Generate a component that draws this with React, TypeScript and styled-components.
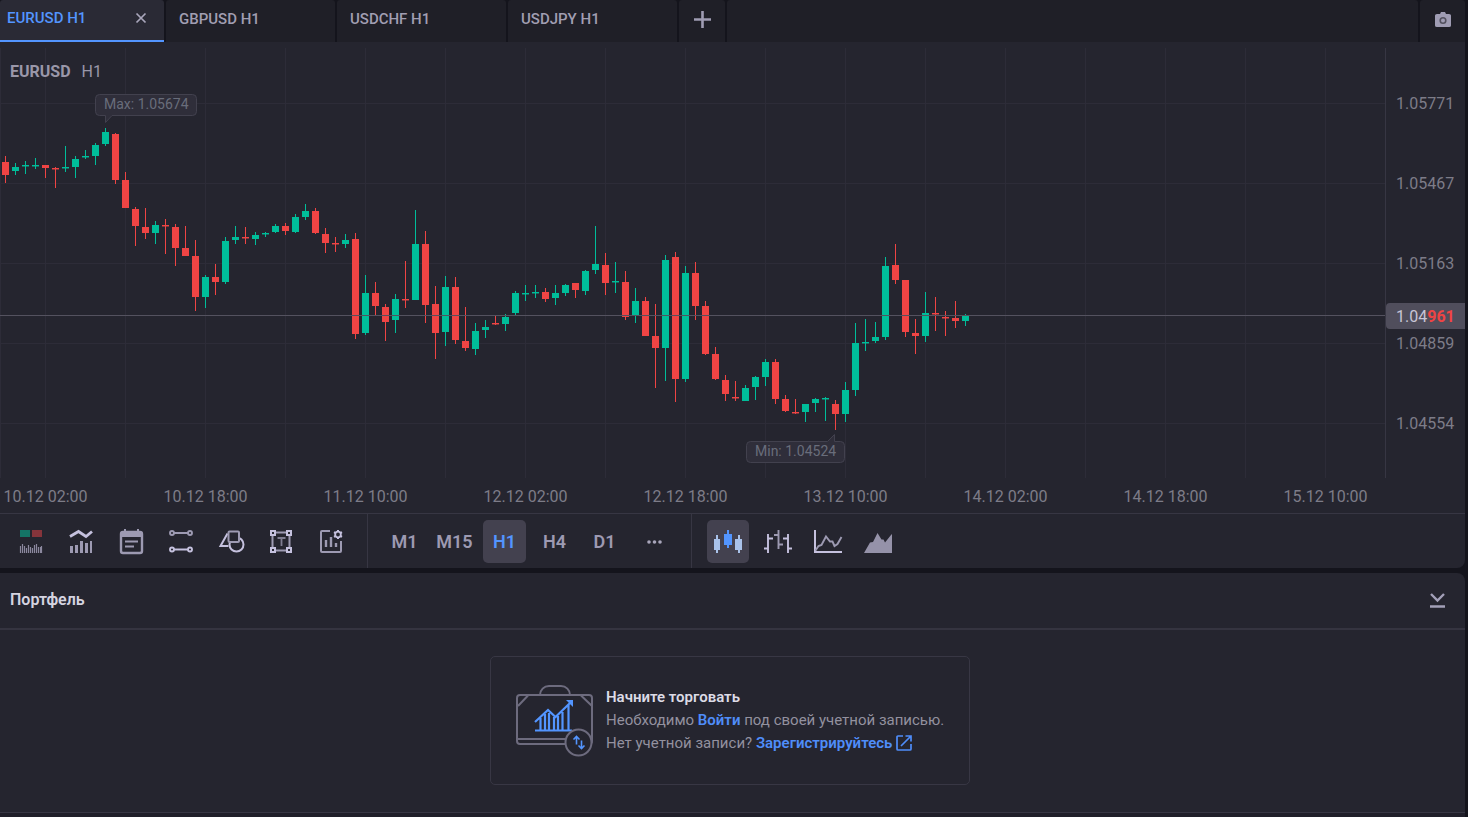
import React from 'react';
import styled, { createGlobalStyle } from 'styled-components';

const c = {
  page: '#14141c',
  panel: '#25252f',
  tab: '#1f1f27',
  line: '#373643',
  grid: '#2d2c38',
  icon: '#9d9ab2',
  bright: '#c5c1de',
  blue: '#5395ff',
  up: '#00bd9a',
  down: '#ef4444',
};

const GlobalStyle = createGlobalStyle`
  * { box-sizing: border-box; }
  body {
    margin: 0;
    background: ${c.page};
    font-family: Roboto, "Liberation Sans", sans-serif;
  }
  button { font: inherit; color: inherit; background: none; border: 0; padding: 0; cursor: pointer; }
  svg { display: block; }
`;

const Page = styled.div`
  display: flex;
  flex-direction: column;
  min-height: 100vh;
  padding-right: 3px;
`;

const TabBar = styled.div`
  display: flex;
  gap: 2px;
  height: 42px;
`;

const Tab = styled.div<{ $active?: boolean }>`
  display: flex;
  align-items: center;
  justify-content: space-between;
  width: ${p => (p.$active ? 164 : 169)}px;
  padding: 0 16px 4px ${p => (p.$active ? 7 : 13)}px;
  border-bottom: ${p => (p.$active ? `2px solid ${c.blue}` : '0')};
  border-radius: 3px 3px 0 0;
  background: ${p => (p.$active ? '#2a2a35' : c.tab)};
  color: ${p => (p.$active ? c.blue : '#a19eb2')};
  font-size: 15px;
  font-weight: 500;
  line-height: 20px;
`;

const TabTool = styled.button<{ $width: number }>`
  display: flex;
  align-items: center;
  justify-content: center;
  width: ${p => p.$width}px;
  padding-bottom: 3px;
  border-radius: 3px 3px 0 0;
  background: ${c.tab};
`;

const TabFill = styled.div`
  flex: 1;
  border-radius: 3px 3px 0 0;
  background: ${c.tab};
`;

const ChartPanel = styled.section`
  border-radius: 0 0 8px 0;
  background: ${c.panel};
`;

const ChartRow = styled.div`
  position: relative;
  display: flex;
  height: 436px;
  padding-top: 6px;
`;

const Plot = styled.svg`
  flex: 1;
  min-width: 0;
  height: 430px;
`;

const Legend = styled.div`
  position: absolute;
  left: 10px;
  top: 20px;
  display: flex;
  gap: 11px;
  color: #9a97a9;
  font-size: 16px;
  line-height: 20px;
`;

const PriceAxis = styled.div`
  position: relative;
  width: 80px;
  padding-top: 16px;
  border-left: 1px solid ${c.line};
`;

const Price = styled.div`
  height: 80px;
  padding-left: 10px;
  color: #7d7c88;
  font-size: 16px;
  line-height: 80px;
`;

const CurrentPrice = styled.div`
  position: absolute;
  top: 255px;
  left: 0;
  right: 0;
  height: 26px;
  padding-left: 10px;
  border-radius: 4px 0 0 4px;
  background: #504e5c;
  color: #c8c5d6;
  font-size: 16px;
  line-height: 28px;

  b { color: ${c.down}; font-weight: 700; }
`;

const TimeAxis = styled.div`
  display: flex;
  gap: 70px;
  height: 35px;
  overflow: hidden;
  color: #7d7c88;
  font-size: 16px;
  line-height: 38px;
`;

const Time = styled.span`
  flex: none;
  width: 91px;
  margin-right: -1px;
  text-align: center;
  white-space: nowrap;
`;

const Toolbar = styled.div`
  display: flex;
  height: 55px;
  border-top: 1px solid ${c.line};
`;

const ToolGroup = styled.div<{ $start: number; $gap: number; $last?: boolean }>`
  display: flex;
  align-items: flex-start;
  gap: ${p => p.$gap}px;
  padding: 6px 15px 0 ${p => p.$start}px;
  border-right: ${p => (p.$last ? '0' : `1px solid ${c.line}`)};
`;

const ToolButton = styled.button<{ $active?: boolean; $wide?: boolean }>`
  display: flex;
  align-items: center;
  justify-content: center;
  width: ${p => (p.$wide ? 43 : 42)}px;
  height: 43px;
  border-radius: 5px;
  background: ${p => (p.$active ? '#43414f' : 'transparent')};
  color: ${p => (p.$active ? c.blue : c.icon)};
  font-size: 18px;
  font-weight: 600;
`;

const Portfolio = styled.section`
  margin-top: 5px;
  border-radius: 0 8px 0 0;
  border-bottom: 1px solid ${c.line};
  background: ${c.panel};
`;

const PortfolioHead = styled.header`
  display: flex;
  align-items: center;
  justify-content: space-between;
  height: 57px;
  padding: 0 20px 2px 10px;
  border-bottom: 2px solid #353440;
`;

const Heading = styled.h2`
  margin: 0;
  color: #d5d4e0;
  font-size: 16px;
  font-weight: 600;
  line-height: 20px;
`;

const PortfolioBody = styled.div`
  display: flex;
  justify-content: center;
  padding: 26px 0 27px;
`;

const Card = styled.div`
  display: flex;
  align-items: center;
  gap: 12px;
  width: 480px;
  height: 129px;
  margin-right: 5px;
  padding-left: 25px;
  border: 1px solid #383744;
  border-radius: 5px;
`;

const CardText = styled.div`
  color: #93919f;
  font-size: 15px;
  line-height: 23px;
  white-space: nowrap;

  strong { color: #dcdbe6; font-weight: 600; }
  p { margin: 0; }
`;

const Link = styled.a`
  color: #4f8dfa;
  font-weight: 600;
  text-decoration: none;

  svg { display: inline-block; margin-left: 4px; vertical-align: -3px; }
`;

const Footer = styled.div`
  flex: 1;
  background: #201f29;
`;

/* Each candle: wick top, body top, body bottom, wick bottom, rising (1) or falling (0). */
const candles: number[][] = [
  [156,162,175,183,0],[163,167,171,175,1],[161,165,167,174,1],[158,165,167,169,1],[165,165,168,178,0],
  [167,168,170,188,0],[146,167,169,172,1],[156,159,167,178,1],[150,156,158,159,1],[143,145,156,165,1],
  [128,132,144,146,1],[133,134,180,184,0],[172,180,208,208,0],[207,209,226,246,0],[208,227,233,239,0],
  [221,225,233,244,1],[219,225,227,254,0],[224,227,248,266,0],[226,248,256,256,0],[240,256,297,311,0],
  [275,277,297,308,1],[264,277,282,295,0],[237,241,282,284,1],[226,237,240,244,1],[227,237,239,244,0],
  [232,235,239,245,1],[232,233,235,237,1],[224,226,232,233,1],[223,226,231,235,0],[214,217,232,233,1],
  [204,211,217,220,1],[208,211,233,234,0],[228,234,243,253,0],[237,243,245,252,0],[234,240,244,248,1],
  [233,239,334,339,0],[275,293,333,335,1],[282,293,306,315,0],[304,307,322,341,0],[294,299,320,333,1],
  [261,299,301,308,0],[210,244,300,300,1],[231,244,305,323,0],[286,304,333,359,0],[276,287,332,346,1],
  [277,287,340,344,0],[307,341,348,351,0],[323,331,349,355,1],[320,327,330,338,1],[315,323,325,325,0],
  [314,317,324,331,1],[291,293,313,315,1],[285,293,295,301,1],[285,292,294,298,1],[288,292,299,302,0],
  [285,293,298,305,1],[284,285,293,296,1],[283,283,290,298,0],[270,271,291,295,1],[226,264,270,274,1],
  [253,265,283,295,0],[262,281,283,293,1],[271,282,317,320,0],[288,301,316,323,1],[297,301,336,336,0],
  [304,336,348,388,0],[255,260,348,381,1],[252,257,379,402,0],[266,273,379,382,1],[262,273,306,320,0],
  [301,306,354,355,0],[347,354,379,380,0],[375,380,394,401,0],[381,397,399,401,0],[385,388,401,401,1],
  [376,377,387,400,1],[359,362,377,386,1],[359,362,399,404,0],[395,399,411,412,0],[399,412,414,414,0],
  [404,404,412,422,1],[398,399,403,412,1],[397,398,400,421,1],[400,404,414,430,0],[382,390,414,422,1],
  [323,343,390,396,1],[319,342,344,351,1],[322,337,341,343,1],[257,266,337,340,1],[244,265,280,284,0],
  [280,280,332,337,0],[319,333,336,354,0],[292,313,336,342,1],[297,313,315,331,0],[311,317,319,336,0],
  [301,318,321,328,0],[314,316,321,326,1],
];

const PLOT_TOP = 48;
const prices = ['1.05771', '1.05467', '1.05163', '1.04859', '1.04554'];
const times = [
  '10.12 02:00', '10.12 18:00', '11.12 10:00', '12.12 02:00', '12.12 18:00',
  '13.12 10:00', '14.12 02:00', '14.12 18:00', '15.12 10:00',
];
const gridX = [0, ...Array.from({ length: 17 }, (_, i) => 45 + i * 80)];

const Chart = () => (
  <Plot role="img" aria-label="EURUSD H1" shapeRendering="crispEdges">
    {gridX.map(x => <rect key={x} x={x} y="0" width="1" height="100%" fill={c.grid} />)}
    {prices.map((p, i) => <rect key={p} x="0" y={55 + i * 80} width="100%" height="1" fill={c.grid} />)}
    {candles.map(([wt, bt, bb, wb, rising], i) => {
      const thin = bb - bt === 2;
      return (
        <g key={i} fill={rising ? c.up : c.down}>
          <rect x={5 + i * 10} y={wt - PLOT_TOP} width="1" height={wb - wt} />
          <rect x={2 + i * 10} y={bt - PLOT_TOP} width="7" height={thin ? 1 : bb - bt} />
          {thin && <rect x={2 + i * 10} y={bt - PLOT_TOP + 1} width="7" height="1" opacity="0.45" />}
        </g>
      );
    })}
    <rect x="0" y="267" width="100%" height="1" fill="#54525f" />
    <g shapeRendering="auto" fill="#2f2e3a" stroke="#42414e">
      <path d="M99.500 46.500h93a4 4 0 0 1 4 4v13a4 4 0 0 1-4 4h-80.500l-6.500 7v-7h-6a4 4 0 0 1-4-4v-13a4 4 0 0 1 4-4z" />
      <path d="M750.500 393.500h77l7-7v7h6a4 4 0 0 1 4 4v13a4 4 0 0 1-4 4h-90a4 4 0 0 1-4-4v-13a4 4 0 0 1 4-4z" />
    </g>
    <g fill="#696d7b" fontSize="14">
      <text x="104" y="61">Max: 1.05674</text>
      <text x="755" y="408">Min: 1.04524</text>
    </g>
  </Plot>
);

const ToolIcon = ({ children }: { children: React.ReactNode }) => (
  <svg width="42" height="43" viewBox="0 0 42 43" fill="none" aria-hidden="true">{children}</svg>
);

const indicators: [string, React.ReactNode][] = [
  ['Trade levels', <>
    <path d="M10 10h10v7H10z" fill="#147466" /><path d="M22 10h10v7H22z" fill="#86343b" />
    <path d="M10.500 26v7M12.500 24v9M14.500 26v7M16.500 28v5M18.500 25v8M20.500 27v6M22.500 28v5M24.500 25v8M26.500 24v9M28.500 27v6M30.500 27v6M31.500 26v7" stroke={c.icon} strokeWidth="1.200" strokeOpacity=".85" />
  </>],
  ['Indicators', <>
    <path d="M10 16.500l8.500-5 7.500 5 6-5" stroke={c.bright} strokeWidth="2.800" />
    <path d="M10 26h3v7h-3zM15 25h3v8h-3zM20 21h3v12h-3zM25 23h3v10h-3zM30 21h2v12h-2z" fill={c.icon} />
  </>],
  ['Calendar', <>
    <rect x="11" y="12" width="21" height="21" rx="2" stroke={c.icon} strokeWidth="2.400" />
    <path d="M11 12h21v5H11zM14 9h2v4h-2zM27 9h2v4h-2z" fill={c.icon} />
    <path d="M15 21.500h13M15 26.500h9" stroke={c.icon} strokeWidth="2.200" />
  </>],
  ['Lines', <>
    <g stroke={c.icon} strokeWidth="1.900"><circle cx="12" cy="13" r="2" /><circle cx="30" cy="13" r="2" /><path d="M14 13h14" strokeWidth="2" /></g>
    <g stroke={c.bright} strokeWidth="1.900"><circle cx="12" cy="29.500" r="2" /><circle cx="30" cy="29.500" r="2" /><path d="M14 29.500h14" strokeWidth="2" /></g>
  </>],
  ['Shapes', <>
    <path d="M17.500 13.500L10.500 26h8" stroke={c.bright} strokeWidth="2" />
    <circle cx="26.500" cy="24.500" r="7" stroke={c.bright} strokeWidth="2" />
    <rect x="18.500" y="11.500" width="10.500" height="10.500" rx="1" fill={c.panel} stroke={c.icon} strokeWidth="2" />
  </>],
  ['Text', <>
    <path d="M16 12.500h10M16 30.500h10M12.500 16v11M29.500 16v11" stroke={c.icon} strokeWidth="2" />
    <path d="M11 11h4v4h-4zM27 11h4v4h-4zM11 28h4v4h-4zM27 28h4v4h-4z" stroke={c.bright} strokeWidth="2" />
    <path d="M17.500 18h8M21.500 18v8" stroke="#7f7d91" strokeWidth="1.800" />
  </>],
  ['Chart settings', <>
    <path d="M20 11h-8q-1 0-1 1v19q0 1 1 1h18q1 0 1-1V21" stroke={c.icon} strokeWidth="2" />
    <path d="M16 20v7M21 17v10M26 23v4" stroke={c.icon} strokeWidth="2.400" />
    <circle cx="28" cy="14.500" r="2.800" stroke={c.bright} strokeWidth="1.800" />
    <path d="M28 10v1.500M28 17.500v1.500M24 12.200l1.500.8M30.500 16l1.500.8M24 16.800l1.500-.8M30.500 13l1.500-.8" stroke={c.bright} strokeWidth="2" />
  </>],
];

const styles: [string, React.ReactNode][] = [
  ['Candles', <>
    <path d="M7 19h6v11H7zM9 15h2v18H9zM28 19h7v11h-7zM31 15h2v18h-2z" fill="#a9c2ea" />
    <path d="M17 14h8v11h-8zM20 10h2v18h-2z" fill={c.blue} />
  </>],
  ['Bars', <>
    <path d="M11 14v19M7 28.500h4M11 18.500h5M31 14v19M26 18.500h5M31 28.500h4" stroke={c.bright} strokeWidth="1.900" />
    <path d="M21.500 10v19M17 15h4.500M21.500 24.500H26" stroke={c.icon} strokeWidth="1.900" />
  </>],
  ['Line', <>
    <path d="M8 10v22h27" stroke={c.bright} strokeWidth="2" />
    <path d="M8.500 30.500L11.500 26l3-1L19 16.500l4 5h2.500l2 4.500 3-2 4-7" stroke={c.icon} strokeWidth="1.900" />
  </>],
  ['Area', <path d="M7 33l6-10.500 3-.5 4.500-9 4 6.500h2l1.500 3L34 15l1-1v19z" fill="#9592a9" />],
];

const Briefcase = () => (
  <svg width="78" height="72" viewBox="0 0 78 72" fill="none" aria-hidden="true">
    <g stroke="#6d6b7e" strokeWidth="2">
      <rect x="1" y="10" width="75" height="49" rx="3" />
      <path d="M24 10c0-5 4-9 9-9h12c5 0 9 4 9 9M1 54h75M12 10.500L2 21M65 10.500L76 21" />
    </g>
    <path d="M19 45.500h37M19 37l13-12 7.500 7L54 18M24.500 33v12M29 29v16M33 28v17M38 32v13M42 31v14M46.500 27v18M52.500 20v25" stroke={c.blue} strokeWidth="2.200" />
    <path d="M50 15h7v7z" fill={c.blue} />
    <circle cx="62.500" cy="57.500" r="13" fill={c.panel} stroke="#6d6b7e" strokeWidth="2" />
    <path d="M60.500 59.500V52M57.500 54.500l3-3 3 3M65.500 55.500V63M62.500 60.500l3 3 3-3" stroke={c.blue} strokeWidth="1.600" />
  </svg>
);

export default function App() {
  return (
    <>
      <GlobalStyle />
      <Page>
        <TabBar>
          <Tab $active>
            <button>EURUSD H1</button>
            <button aria-label="Close tab">
              <svg width="14" height="14" viewBox="0 0 14 14"><path d="M2.500 2.500l9 9M11.500 2.500l-9 9" stroke="#a9a6bb" strokeWidth="1.700" /></svg>
            </button>
          </Tab>
          {['GBPUSD H1', 'USDCHF H1', 'USDJPY H1'].map(t => <Tab key={t}><button>{t}</button></Tab>)}
          <TabTool $width={46} aria-label="Add tab">
            <svg width="17" height="17" viewBox="0 0 17 17"><path d="M8.500 0v17M0 8.500h17" stroke="#9f9cb3" strokeWidth="2.600" /></svg>
          </TabTool>
          <TabFill />
          <TabTool $width={45} aria-label="Take a screenshot">
            <svg width="16" height="15" viewBox="0 0 16 15">
              <path d="M2 2h3l1-2h4l1 2h3q2 0 2 1.500v10q0 1.500-2 1.500H2q-2 0-2-1.500v-10Q0 2 2 2z" fill="#9f9cb3" />
              <circle cx="8" cy="8.500" r="2.800" fill="none" stroke="#53515f" strokeWidth="1.600" />
            </svg>
          </TabTool>
        </TabBar>

        <ChartPanel>
          <ChartRow>
            <Chart />
            <Legend><b>EURUSD</b><span>H1</span></Legend>
            <PriceAxis>
              {prices.map(p => <Price key={p}>{p}</Price>)}
              <CurrentPrice>1.04<b>961</b></CurrentPrice>
            </PriceAxis>
          </ChartRow>
          <TimeAxis>{times.map(t => <Time key={t}>{t}</Time>)}</TimeAxis>
          <Toolbar>
            <ToolGroup $start={10} $gap={8}>
              {indicators.map(([label, icon]) => (
                <ToolButton key={label} aria-label={label}><ToolIcon>{icon}</ToolIcon></ToolButton>
              ))}
            </ToolGroup>
            <ToolGroup $start={15} $gap={7}>
              {['M1', 'M15', 'H1', 'H4', 'D1'].map(t => (
                <ToolButton key={t} $wide $active={t === 'H1'}>{t}</ToolButton>
              ))}
              <ToolButton $wide aria-label="More timeframes">
                <svg width="15" height="4" viewBox="0 0 15 4" fill="#a9a6bb"><circle cx="2" cy="2" r="1.800" /><circle cx="7.500" cy="2" r="1.800" /><circle cx="13" cy="2" r="1.800" /></svg>
              </ToolButton>
            </ToolGroup>
            <ToolGroup $start={15} $gap={8} $last>
              {styles.map(([label, icon]) => (
                <ToolButton key={label} aria-label={label} $active={label === 'Candles'}><ToolIcon>{icon}</ToolIcon></ToolButton>
              ))}
            </ToolGroup>
          </Toolbar>
        </ChartPanel>

        <Portfolio>
          <PortfolioHead>
            <Heading>Портфель</Heading>
            <button aria-label="Collapse">
              <svg width="15" height="17" viewBox="0 0 15 17" fill="none"><path d="M1 3l6.500 6.500L14 3M0 15.500h15" stroke="#a3a0b8" strokeWidth="2.400" /></svg>
            </button>
          </PortfolioHead>
          <PortfolioBody>
            <Card>
              <Briefcase />
              <CardText>
                <strong>Начните торговать</strong>
                <p>Необходимо <Link href="#login">Войти</Link> под своей учетной записью.</p>
                <p>
                  Нет учетной записи?{' '}
                  <Link href="#register">
                    Зарегистрируйтесь
                    <svg width="16" height="16" viewBox="0 0 16 16" fill="none" aria-hidden="true">
                      <path d="M7 1H2Q1 1 1 2v12q0 1 1 1h12q1 0 1-1V9M9.500 1H15v5.500M15 1L5 11" stroke="#4f8dfa" strokeWidth="1.700" />
                    </svg>
                  </Link>
                </p>
              </CardText>
            </Card>
          </PortfolioBody>
        </Portfolio>
        <Footer />
      </Page>
    </>
  );
}
